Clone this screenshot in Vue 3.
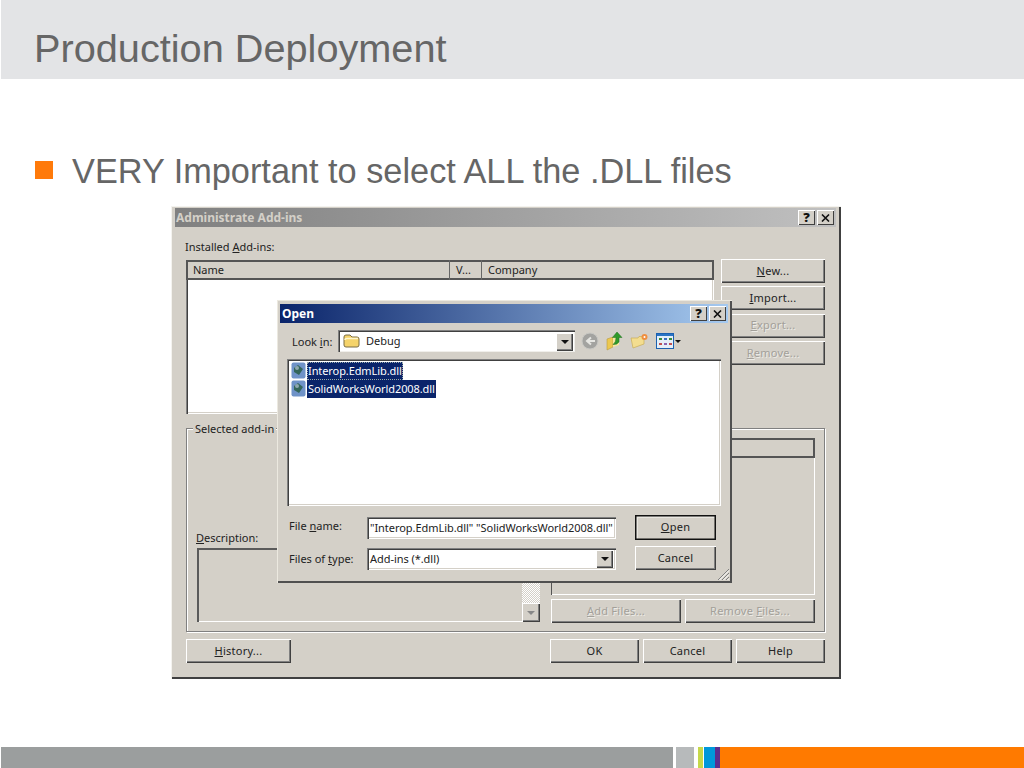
<script setup>
const headerBtns = [
  { label: 'V...', cls: 'col-v' },
  { label: 'Company', cls: 'col-c' },
]
</script>

<template>
  <div class="slide">
    <header class="slide-head"><h1>Production Deployment</h1></header>
    <div class="bullet"><i class="sq"></i><span>VERY Important to select ALL the .DLL files</span></div>

    <section class="win admin">
      <div class="title gray">
        <span>Administrate Add-ins</span>
        <div class="caps">
          <b class="cap">?</b>
          <b class="cap"><svg width="9" height="8" viewBox="0 0 9 8"><path d="M1 0.500 L8 7.500 M8 0.500 L1 7.500" stroke="#111" stroke-width="1.600"/></svg></b>
        </div>
      </div>
      <div class="admin-body">
        <div class="lbl installed">Installed <u>A</u>dd-ins:</div>
        <div class="top-row">
          <div class="list sunken">
            <div class="lv-head">
              <div class="col-n">Name</div>
              <div v-for="h in headerBtns" :key="h.label" :class="h.cls">{{ h.label }}</div>
            </div>
          </div>
          <div class="side">
            <button class="btn"><u>N</u>ew...</button>
            <button class="btn"><u>I</u>mport...</button>
            <button class="btn off"><u>E</u>xport...</button>
            <button class="btn off"><u>R</u>emove...</button>
          </div>
        </div>
        <div class="group">
          <span class="legend">Selected add-in</span>
          <div class="g-left">
            <div class="lbl desc"><u>D</u>escription:</div>
            <div class="descbox">
              <div class="sb">
                <div class="track"></div>
                <div class="sb-btn"><i class="arrow gray-arrow"></i></div>
              </div>
            </div>
          </div>
          <div class="g-right">
            <div class="pane">
              <div class="pane-head"></div>
            </div>
            <div class="pane-btns">
              <button class="btn off"><u>A</u>dd Files...</button>
              <button class="btn off">Remove <u>F</u>iles...</button>
            </div>
          </div>
        </div>
        <div class="foot-row">
          <button class="btn hist"><u>H</u>istory...</button>
          <div class="foot-r">
            <button class="btn">OK</button>
            <button class="btn">Cancel</button>
            <button class="btn">Help</button>
          </div>
        </div>
      </div>
    </section>

    <section class="win open">
      <div class="title blue">
        <span>Open</span>
        <div class="caps">
          <b class="cap">?</b>
          <b class="cap"><svg width="9" height="8" viewBox="0 0 9 8"><path d="M1 0.500 L8 7.500 M8 0.500 L1 7.500" stroke="#111" stroke-width="1.600"/></svg></b>
        </div>
      </div>
      <div class="look">
        <span class="lbl look-l">Look <u>i</u>n:</span>
        <div class="combo look-c">
          <svg class="ic" width="18" height="16" viewBox="0 0 18 16">
            <path d="M1 4 Q1 2 3 2 H7 L9 4 H14 Q16 4 16 6 V12 Q16 14 14 14 H3 Q1 14 1 12Z" fill="#f5d36a" stroke="#7a6c44"/>
            <path d="M2 7 Q2 5.500 4 5.500 H15" fill="none" stroke="#fff6cc" stroke-width="1.500"/>
          </svg>
          <span class="debug">Debug</span>
          <div class="dd"><i class="arrow"></i></div>
        </div>
        <div class="tools">
          <svg width="18" height="18" viewBox="0 0 18 18"><circle cx="9" cy="9" r="8" fill="#a3a3a0" stroke="#c8c8c4"/><path d="M14 9 H7 M10 5.500 L6 9 L10 12.500" fill="none" stroke="#e6e6e2" stroke-width="2"/></svg>
          <svg width="17" height="20" viewBox="0 0 17 20"><path d="M1 8 L7 6 V16 L1 19Z" fill="#ecc850" stroke="#b89a40" stroke-width=".6"/><path d="M7 6 H13 V14 L7 16Z" fill="#f7e8a0"/><path d="M11 1 L16 6.500 H13 V11 Q11 14 7 13.500 Q10 11.500 10 6.500 H6.500 Z" fill="#2f9a2a" stroke="#1f6f1d" stroke-width=".5"/></svg>
          <svg width="19" height="16" viewBox="0 0 19 16"><path d="M1 5 H8 L9 3.500 H14 V11 L3 15 Z" fill="#f3dd8f" stroke="#c8ad58" stroke-width=".7"/><circle cx="14.500" cy="4" r="3" fill="#ef8f40"/><circle cx="14.500" cy="4" r="1" fill="#fff"/></svg>
          <div class="views">
            <svg width="18" height="16" viewBox="0 0 18 16"><rect x=".5" y=".5" width="17" height="15" fill="#e4eff9" stroke="#1c60b0"/><rect x="1" y="1" width="16" height="2" fill="#2a74c4"/><rect x="3" y="5" width="3" height="2" fill="#3a8a3a"/><rect x="8" y="5" width="3" height="2" fill="#3a70c0"/><rect x="13" y="5" width="3" height="2" fill="#3a8a3a"/><rect x="3" y="10" width="3" height="2" fill="#c05050"/><rect x="8" y="10" width="3" height="2" fill="#8a60b0"/><rect x="13" y="10" width="3" height="2" fill="#c05050"/></svg>
            <i class="arrow small"></i>
          </div>
        </div>
      </div>
      <div class="files sunken">
        <div class="file first">
          <svg width="15" height="17" viewBox="0 0 15 17"><rect x=".5" y=".5" width="14" height="16" rx="2" fill="#6f93c8"/><path d="M3 6 L7 3 L12 7 L8 13 L3 10Z" fill="#33665a"/><circle cx="6" cy="6" r="2" fill="#8fa8b0"/></svg>
          <span class="fname dotted">Interop.EdmLib.dll</span>
        </div>
        <div class="file">
          <svg width="15" height="17" viewBox="0 0 15 17"><rect x=".5" y=".5" width="14" height="16" rx="2" fill="#6f93c8"/><path d="M3 6 L7 3 L12 7 L8 13 L3 10Z" fill="#33665a"/><circle cx="6" cy="6" r="2" fill="#8fa8b0"/></svg>
          <span class="fname">SolidWorksWorld2008.dll</span>
        </div>
      </div>
      <div class="form">
        <span class="lbl up">File <u>n</u>ame:</span>
        <div class="field sunken">"Interop.EdmLib.dll" "SolidWorksWorld2008.dll"</div>
        <button class="btn def"><u>O</u>pen</button>
        <span class="lbl down">Files of <u>t</u>ype:</span>
        <div class="field sunken low">Add-ins (*.dll)<div class="dd"><i class="arrow"></i></div></div>
        <button class="btn">Cancel</button>
      </div>
      <svg class="grip" width="13" height="13" viewBox="0 0 13 13"><path d="M12 1 L1 12 M12 5 L5 12 M12 9 L9 12" stroke="#808080" fill="none"/><path d="M12 2.500 L2.500 12 M12 6.500 L6.500 12 M12 10.500 L10.500 12" stroke="#fff" fill="none"/></svg>
    </section>

    <footer class="slide-foot">
      <div class="f-a"></div><div class="f-b"></div><div class="f-c"></div><div class="f-d"></div><div class="f-e"></div><div class="f-f"></div>
    </footer>
  </div>
</template>

<style>
html, body { margin: 0; background: #fff; }
</style>

<style scoped>
.slide { position: relative; width: 1024px; height: 768px; overflow: hidden; background: #fff; font-family: "Liberation Sans", Arial, sans-serif; color: #666; }
.slide-head { box-sizing: border-box; height: 79px; margin-left: 1px; background: #e3e4e6; display: flex; align-items: center; padding: 19px 0 0 33px; }
.slide-head h1 { margin: 0; font-size: 39.700px; font-weight: 400; line-height: 1; color: #666; }
.bullet { display: flex; align-items: center; margin: 73px 0 0 35px; height: 36px; font-size: 34.300px; gap: 19px; }
.bullet span { margin-top: 2px; }
.sq { width: 18px; height: 18px; background: #ff7a0a; }
.win { box-sizing: border-box; background: #d4d0c8; font-family: "Noto Sans", sans-serif; font-size: 11px; color: #222; }
.admin { position: absolute; left: 171px; top: 206px; width: 670px; height: 473px; padding: 2px 5px 0 4px; box-shadow: inset 1px 1px #f4f3ef, inset -2px -2px #404040; }
.open { position: absolute; left: 277px; top: 300px; width: 455px; height: 283px; padding: 4px 4px 0 3px; box-shadow: inset 1px 1px #ece9e0, inset -2px -2px #505050; }
.title { height: 19px; display: flex; align-items: center; justify-content: space-between; font-weight: 700; font-size: 12px; padding: 0 2px 0 1px; }
.gray { background: linear-gradient(90deg, #808080, #c0c0c0); color: #d4d0c8; }
.blue { background: linear-gradient(90deg, #0a246a, #a6caf0); color: #fff; padding: 0 2px 0 2px; }
.caps { display: flex; gap: 2px; }
.cap { width: 17px; height: 15px; background: #d4d0c8; color: #111; font-size: 13px; line-height: 15px; display: flex; align-items: center; justify-content: center; box-shadow: inset 1px 1px #fff, inset -1px -1px #404040; }
.admin-body { padding: 0 0 0 11px; }
.lbl { white-space: nowrap; line-height: 14px; }
.installed { margin: 13px 0 0 -1px; height: 14px; }
.top-row { display: flex; gap: 7px; margin-top: 5px; height: 155px; }
.sunken { box-shadow: inset 1px 1px #808080, inset 2px 2px #404040, inset -1px -1px #fff, inset -2px -2px #d4d0c8; }
.list { width: 528px; margin-top: 1px; background: #fff; box-sizing: border-box; height: 154px; }
.lv-head { display: flex; height: 20px; background: #d4d0c8; box-shadow: inset 2px 2px #555, inset -2px -2px #555; line-height: 20px; }
.col-n { padding-left: 7px; flex: 0 0 256px; }
.col-v { flex: 0 0 32px; padding-left: 6px; box-sizing: border-box; border-left: 1px solid #666; }
.col-c { flex: 1; padding-left: 6px; border-left: 1px solid #666; }
.side { display: flex; flex-direction: column; gap: 3.400px; width: 104px; }
.btn { box-sizing: border-box; border: 0; padding: 0 0 2px; background: #d4d0c8; font: inherit; letter-spacing: .25px; color: #222; height: 24px; box-shadow: inset 1px 1px #fff, inset -1px -1px #404040, inset -2px -2px #808080; }
.btn.off { color: #a3a09a; text-shadow: 1px 1px #ecebe6; }
.group { position: relative; box-sizing: border-box; width: 639px; height: 204px; margin-top: 14px; border: 1px solid #808080; box-shadow: 1px 1px #fff, inset 1px 1px #fff; display: flex; }
.legend { position: absolute; left: 6px; top: -7px; padding: 0 2px; background: #d4d0c8; line-height: 14px; }
.g-left { width: 355px; flex: none; padding-left: 10px; box-sizing: border-box; display: flex; flex-direction: column; justify-content: flex-end; padding-bottom: 9px; }
.desc { margin: 0 0 3px -1px; }
.descbox { height: 74px; width: 343px; flex: none; display: flex; justify-content: flex-end; align-items: flex-end; box-sizing: border-box; box-shadow: inset 2px 2px #5a5a5a, inset -1px -1px #fff; }
.sb { width: 18px; height: 40px; display: flex; flex-direction: column; }
.track { flex: 1; background: repeating-conic-gradient(#d4d0c8 0 25%, #fff 0 50%) 0 0 / 2px 2px; }
.sb-btn { height: 19px; background: #d4d0c8; display: flex; align-items: center; justify-content: center; box-shadow: inset 1px 1px #fff, inset -1px -1px #404040, inset -2px -2px #808080; }
.g-right { width: 264px; flex: none; padding-top: 9px; margin-left: 9px; box-sizing: border-box; }
.pane { width: 264px; height: 157px; box-sizing: border-box; box-shadow: inset 1px 0 #555, inset -1px -1px #fff; }
.pane-head { height: 20px; box-shadow: inset 0 2px #555, inset -2px 0 #555, inset 0 -2px #555; }
.pane-btns { display: flex; gap: 4px; margin-top: 4px; width: 264px; }
.pane-btns .btn { width: 130px; }
.foot-row { display: flex; justify-content: space-between; margin-top: 7px; width: 639px; }
.hist { width: 105px; }
.foot-r { display: flex; gap: 4px; }
.foot-r .btn { width: 89px; }
.look { display: flex; align-items: center; height: 22px; margin-top: 7px; padding-left: 12px; }
.look-l { width: 46px; margin-top: 2px; }
.combo { position: relative; box-sizing: border-box; display: flex; align-items: center; background: #fff; box-shadow: inset 1px 1px #808080, inset 2px 2px #404040, inset -1px -1px #f0efeb; gap: 5px; padding-left: 5px; }
.look-c { width: 237px; height: 22px; }
.debug { margin-bottom: 2px; }
.ic { flex: none; }
.dd { position: absolute; right: 2px; top: 3px; width: 17px; height: 18px; background: #d4d0c8; display: flex; align-items: center; justify-content: center; box-shadow: inset 1px 1px #fff, inset -1px -1px #404040, inset -2px -2px #808080; }
.arrow { width: 0; height: 0; border: 4px solid transparent; border-top: 4px solid #111; border-bottom: 0; }
.arrow.small { border-width: 3px 3px 0; margin-left: 1px; }
.gray-arrow { border-top-color: #888; }
.tools { display: flex; align-items: center; gap: 7px; margin-left: 6px; }
.views { display: flex; align-items: center; }
.files { box-sizing: border-box; height: 147px; width: 434px; margin: 7px 0 0 7px; background: #fff; padding: 3px 0 0 4px; display: flex; flex-direction: column; gap: 0.500px; }
.file { display: flex; align-items: center; height: 17.500px; gap: 1px; }
.fname { background: #0a246a; color: #fff; height: 17.500px; line-height: 17px; padding: 0 1px; letter-spacing: -.09px; }
.dotted { outline: 1px dotted #9aa; outline-offset: -1px; }
.form { display: grid; grid-template-columns: 78px 249px 81px; row-gap: 6px; margin: 9px 0 0 9px; align-items: center; }
.form .up { margin-bottom: 4px; }
.form .down { margin-top: 2px; }
.form .btn { margin-left: 19px; width: 81px; }
.form .btn.def { height: 25px; box-shadow: inset 0 0 0 1.500px #111, inset 3px 3px #e8e6e0; }
.field { position: relative; box-sizing: border-box; height: 22px; background: #fff; line-height: 22px; padding-left: 3px; white-space: nowrap; overflow: hidden; width: 249px; letter-spacing: -.05px; }
.field.low { align-self: end; }
.field .dd { top: 2px; right: 3px; }
.grip { position: absolute; right: 2px; bottom: 2px; }
.slide-foot { position: absolute; left: 1px; right: 0; bottom: 0; height: 21px; display: flex; }
.f-a { width: 672px; background: #9b9e9e; }
.f-b { width: 18px; margin-left: 3px; background: #b7babb; }
.f-c { width: 5px; margin-left: 4px; background: #c6d84a; }
.f-d { width: 11px; margin-left: 1px; background: #0098da; }
.f-e { width: 5px; background: #5b2d8e; }
.f-f { flex: 1; background: #ff7a00; }
</style>
